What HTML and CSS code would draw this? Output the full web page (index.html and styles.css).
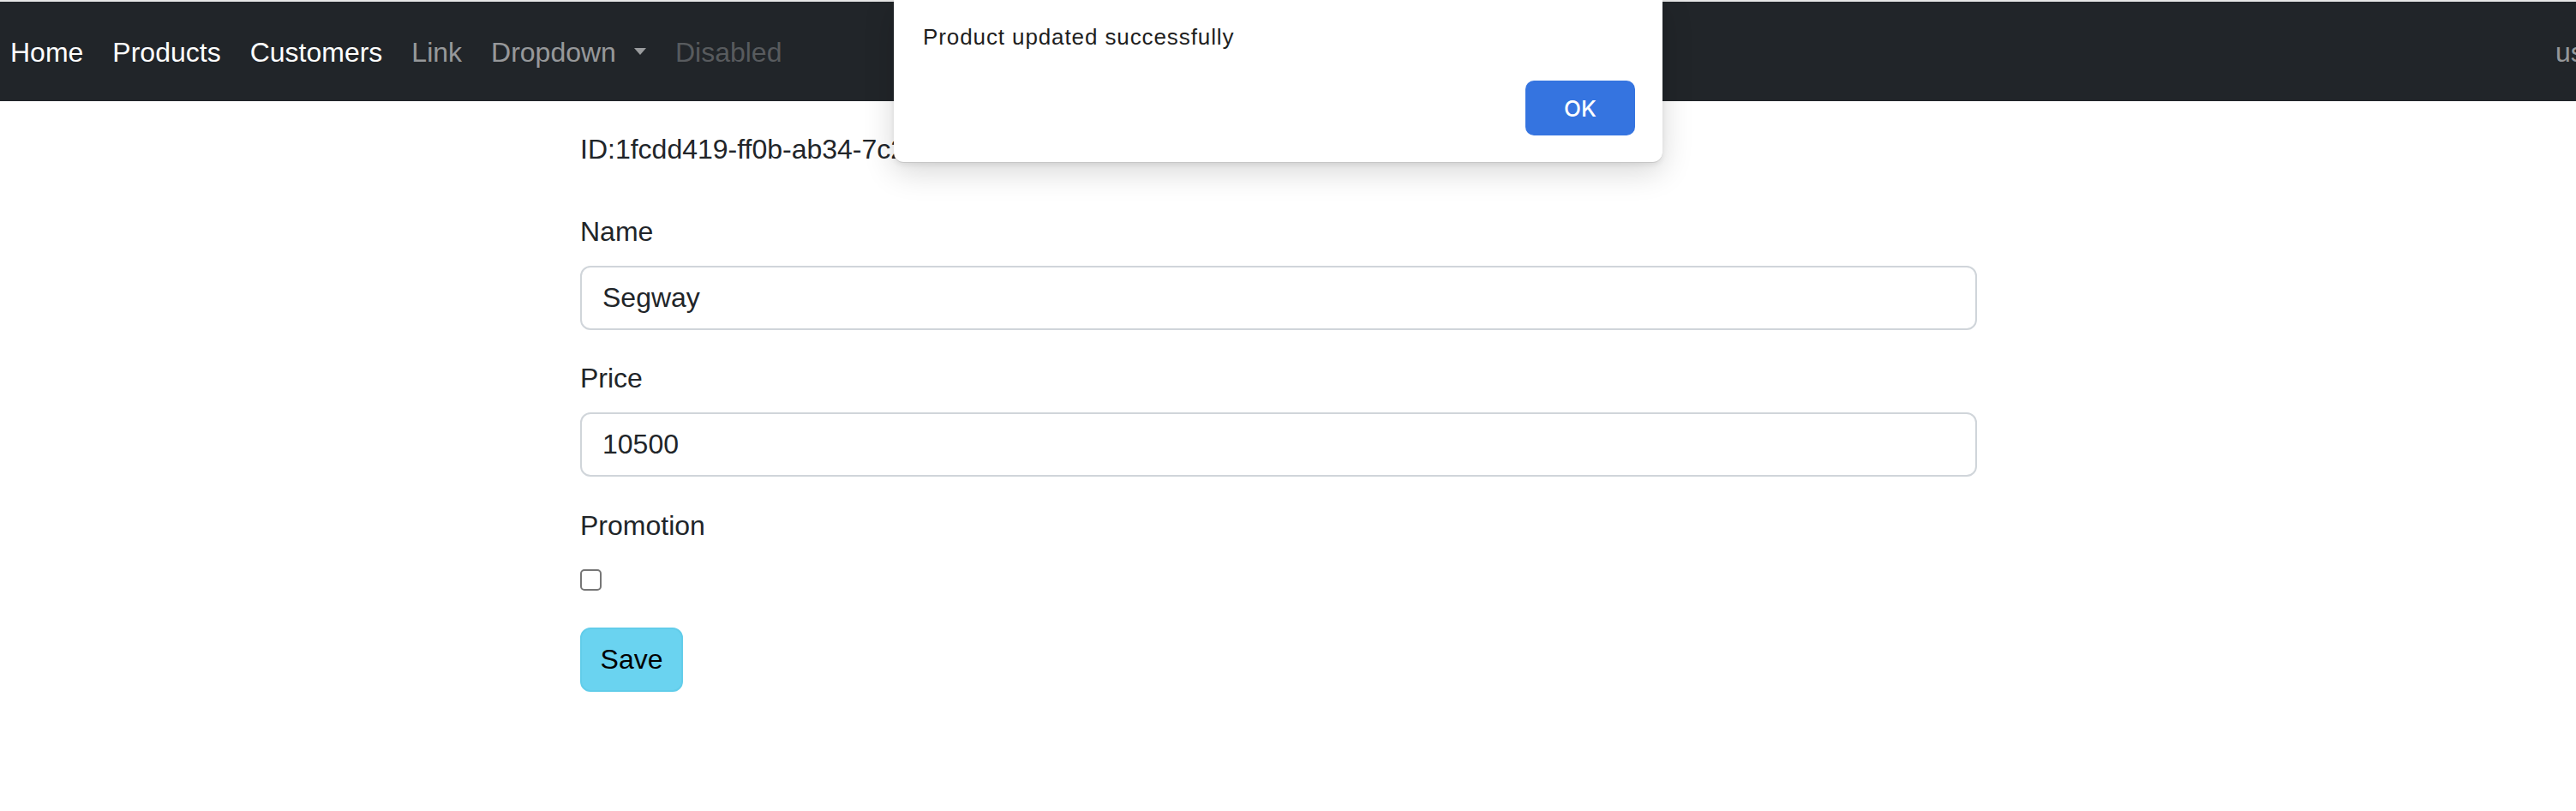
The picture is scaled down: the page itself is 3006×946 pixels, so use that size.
FILE: index.html
```html
<!DOCTYPE html>
<html lang="en">
<head>
<meta charset="utf-8">
<title>Edit product</title>
<link rel="stylesheet" href="styles.css">
</head>
<body>
<nav class="navbar">
  <ul class="nav-list">
    <li><a class="nav-link active" href="#">Home</a></li>
    <li><a class="nav-link active" href="#">Products</a></li>
    <li><a class="nav-link active" href="#">Customers</a></li>
    <li><a class="nav-link" href="#">Link</a></li>
    <li><a class="nav-link dropdown-toggle" href="#">Dropdown</a></li>
    <li><a class="nav-link disabled" href="#">Disabled</a></li>
  </ul>
  <div class="nav-user"><span class="nav-link">user@example.com</span></div>
</nav>

<main class="content">
  <p class="product-id">ID:1fcdd419-ff0b-ab34-7c2e-9a0d51b3e8f2</p>
  <form class="product-form">
    <div class="field">
      <label class="form-label" for="name">Name</label>
      <input class="form-control" id="name" type="text" value="Segway">
    </div>
    <div class="field">
      <label class="form-label" for="price">Price</label>
      <input class="form-control" id="price" type="text" value="10500">
    </div>
    <div class="field field-check">
      <label class="form-label" for="promo">Promotion</label>
      <input class="check" id="promo" type="checkbox">
    </div>
    <button class="btn-save" type="button">Save</button>
  </form>
</main>

<div class="alert-dialog" role="alertdialog">
  <p class="alert-text">Product updated successfully</p>
  <div class="alert-actions">
    <button class="alert-ok" type="button">OK</button>
  </div>
</div>
</body>
</html>
```

FILE: styles.css
```css
* { box-sizing: border-box; }

html, body {
  margin: 0;
  padding: 0;
  background: #ffffff;
  overflow: hidden;
}

body {
  width: 3006px;
  height: 946px;
  font-family: "Liberation Sans", Arial, sans-serif;
  font-size: 32px;
  line-height: 48px;
  color: #212529;
  position: relative;
}

/* ---------- navbar ---------- */
.navbar {
  display: flex;
  align-items: center;
  height: 118px;
  border-top: 2px solid #e6e6e6;
  background: #212529;
  padding: 35px 0 33px 0;
  overflow: hidden;
}

.nav-list {
  display: flex;
  gap: 34px;
  list-style: none;
  margin: 0;
  padding: 0 0 0 12px;
  flex: 1 1 auto;
}

.nav-link {
  display: block;
  color: rgba(255, 255, 255, 0.55);
  text-decoration: none;
  white-space: nowrap;
}

.nav-link.active { color: #ffffff; }
.nav-link.disabled { color: rgba(255, 255, 255, 0.25); }

.dropdown-toggle::after {
  content: "";
  display: inline-block;
  margin-left: 21px;
  vertical-align: 8px;
  border-top: 8px solid rgba(255, 255, 255, 0.55);
  border-left: 7.5px solid transparent;
  border-right: 7.5px solid transparent;
  border-bottom: 0;
}

.nav-user {
  flex: 0 0 24px;
  width: 24px;
  min-width: 0;
  overflow: visible;
  white-space: nowrap;
}

/* ---------- content ---------- */
.content {
  width: 1630px;
  margin: 32px 0 0 677px;
}

.product-id {
  margin: 0 0 48px 0;
}

.field { margin-bottom: 32px; }
.field:nth-child(2) { margin-bottom: 33px; }
.field-check { margin-bottom: 43px; }

.form-label {
  display: block;
  margin-bottom: 16px;
}

.form-control {
  display: block;
  width: 100%;
  height: 75px;
  padding: 0 24px;
  font-family: "Liberation Sans", Arial, sans-serif;
  font-size: 32px;
  color: #212529;
  background: #ffffff;
  border: 2px solid #d0d5da;
  border-radius: 12px;
  outline: none;
}

.check {
  appearance: none;
  -webkit-appearance: none;
  display: block;
  width: 25px;
  height: 25px;
  margin: 27px 0 0 0;
  border: 2px solid #767676;
  border-radius: 5px;
  background: #ffffff;
}

.btn-save {
  display: block;
  width: 120px;
  height: 75px;
  padding: 0;
  font-family: "Liberation Sans", Arial, sans-serif;
  font-size: 32px;
  color: #000000;
  background: #6ad3f0;
  border: 2px solid #62cdea;
  border-radius: 12px;
}

/* ---------- alert dialog (overlay) ---------- */
.alert-dialog {
  position: absolute;
  top: 0;
  left: 1043px;
  width: 897px;
  height: 190px;
  background: #ffffff;
  border-radius: 0 0 12px 12px;
  border-bottom: 1px solid rgba(0, 0, 0, 0.22);
  box-shadow: 0 10px 36px rgba(0, 0, 0, 0.16), 0 2px 6px rgba(0, 0, 0, 0.08);
  padding: 27px 32px 0 34px;
}

.alert-text {
  margin: 0;
  font-size: 26px;
  line-height: 32px;
  letter-spacing: 0.9px;
  color: #1e1e1e;
}

.alert-actions {
  display: flex;
  justify-content: flex-end;
  margin-top: 35px;
}

.alert-ok {
  width: 128px;
  height: 64px;
  padding: 0;
  border: 0;
  border-radius: 10px;
  background: #3574e0;
  color: #ffffff;
  font-family: Inter, "Liberation Sans", sans-serif;
  font-weight: 500;
  font-size: 26px;
}
```
